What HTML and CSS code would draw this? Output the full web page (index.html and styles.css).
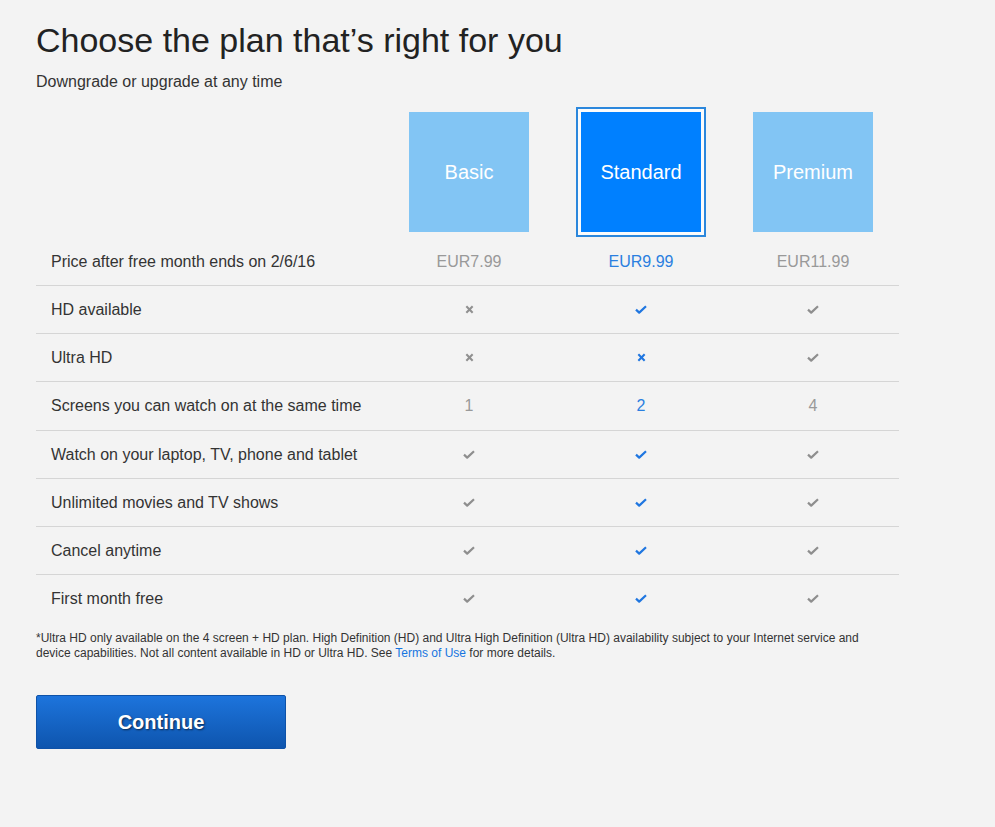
FILE: index.html
```html
<!DOCTYPE html>
<html lang="en">
<head>
<meta charset="utf-8">
<title>Choose the plan</title>
<link rel="stylesheet" href="styles.css">
</head>
<body>
<svg width="0" height="0" class="defs">
  <defs>
    <symbol id="chk" viewBox="0 0 12 9"><path d="M1 4.6 L4.2 7.6 L11 1.2" fill="none" stroke="currentColor" stroke-width="2.2" stroke-linejoin="round"/></symbol>
    <symbol id="crs" viewBox="0 0 10 10"><path d="M1.5 1.5 L8.5 8.5 M8.5 1.5 L1.5 8.5" fill="none" stroke="currentColor" stroke-width="2.3"/></symbol>
  </defs>
</svg>
<main class="page">
  <h1 class="title">Choose the plan that’s right for you</h1>
  <p class="subtitle">Downgrade or upgrade at any time</p>

  <div class="table">
    <div class="row head">
      <div class="label"></div>
      <div class="cell"><div class="plan">Basic</div></div>
      <div class="cell"><div class="plan selected">Standard</div></div>
      <div class="cell"><div class="plan">Premium</div></div>
    </div>
    <div class="row line">
      <div class="label">Price after free month ends on 2/6/16</div>
      <div class="cell grey">EUR7.99</div>
      <div class="cell blue">EUR9.99</div>
      <div class="cell grey">EUR11.99</div>
    </div>
    <div class="row line">
      <div class="label">HD available</div>
      <div class="cell grey"><svg class="x"><use href="#crs"/></svg></div>
      <div class="cell blue"><svg class="c"><use href="#chk"/></svg></div>
      <div class="cell grey"><svg class="c"><use href="#chk"/></svg></div>
    </div>
    <div class="row line">
      <div class="label">Ultra HD</div>
      <div class="cell grey"><svg class="x"><use href="#crs"/></svg></div>
      <div class="cell blue"><svg class="x"><use href="#crs"/></svg></div>
      <div class="cell grey"><svg class="c"><use href="#chk"/></svg></div>
    </div>
    <div class="row line tall">
      <div class="label">Screens you can watch on at the same time</div>
      <div class="cell grey">1</div>
      <div class="cell blue">2</div>
      <div class="cell grey">4</div>
    </div>
    <div class="row line">
      <div class="label">Watch on your laptop, TV, phone and tablet</div>
      <div class="cell grey"><svg class="c"><use href="#chk"/></svg></div>
      <div class="cell blue"><svg class="c"><use href="#chk"/></svg></div>
      <div class="cell grey"><svg class="c"><use href="#chk"/></svg></div>
    </div>
    <div class="row line">
      <div class="label">Unlimited movies and TV shows</div>
      <div class="cell grey"><svg class="c"><use href="#chk"/></svg></div>
      <div class="cell blue"><svg class="c"><use href="#chk"/></svg></div>
      <div class="cell grey"><svg class="c"><use href="#chk"/></svg></div>
    </div>
    <div class="row line">
      <div class="label">Cancel anytime</div>
      <div class="cell grey"><svg class="c"><use href="#chk"/></svg></div>
      <div class="cell blue"><svg class="c"><use href="#chk"/></svg></div>
      <div class="cell grey"><svg class="c"><use href="#chk"/></svg></div>
    </div>
    <div class="row line last">
      <div class="label">First month free</div>
      <div class="cell grey"><svg class="c"><use href="#chk"/></svg></div>
      <div class="cell blue"><svg class="c"><use href="#chk"/></svg></div>
      <div class="cell grey"><svg class="c"><use href="#chk"/></svg></div>
    </div>
  </div>

  <p class="note">*Ultra HD only available on the 4 screen + HD plan. High Definition (HD) and Ultra High Definition (Ultra HD) availability subject to your Internet service and device capabilities. Not all content available in HD or Ultra HD. See <a href="#" class="link">Terms of Use</a> for more details.</p>

  <button class="continue" type="button">Continue</button>
</main>
</body>
</html>
```

FILE: styles.css
```css
html, body {
  margin: 0;
  padding: 0;
  background: #f3f3f3;
}
body {
  font-family: "Liberation Sans", Arial, sans-serif;
  color: #333;
}
.defs {
  position: absolute;
  width: 0;
  height: 0;
}
.page {
  padding: 20px 0 0 36px;
}
.title {
  margin: 0;
  font-size: 34px;
  line-height: 40px;
  font-weight: normal;
  color: #222;
}
.subtitle {
  margin: 12px 0 0;
  font-size: 16px;
  line-height: 20px;
}
.table {
  width: 863px;
  margin-top: 20px;
}
.row {
  display: grid;
  grid-template-columns: 347px repeat(3, 172px);
  align-items: center;
}
.row.head {
  height: 126px;
  align-items: start;
}
.row.line {
  height: 47px;
  border-bottom: 1px solid #d5d5d5;
}
.row.line.tall {
  height: 48px;
}
.row.line.last {
  border-bottom: none;
}
.label {
  padding-left: 15px;
  font-size: 16px;
  line-height: 20px;
  color: #333;
}
.cell {
  display: flex;
  justify-content: center;
  align-items: center;
  font-size: 16px;
  line-height: 20px;
}
.grey { color: #999; }
.blue { color: #2a7fe0; }
.plan {
  width: 120px;
  height: 120px;
  background: #82c5f4;
  color: #fff;
  font-size: 20px;
  display: flex;
  align-items: center;
  justify-content: center;
}
.plan.selected {
  background: #0080ff;
  box-shadow: 0 0 0 3px #fbfbfb, 0 0 0 5px #2b87dc;
}
.c {
  width: 12px;
  height: 9px;
}
.cell.grey .c { color: #8e8e8e; }
.cell.blue .c, .cell.blue .x { color: #1f76e0; }
.x {
  width: 9px;
  height: 9px;
}
.cell.grey .x { color: #909090; }
.note {
  margin: 9px 0 0;
  width: 845px;
  font-size: 12px;
  line-height: 15px;
  color: #333;
}
.link {
  color: #1675e0;
  text-decoration: none;
}
.continue {
  margin-top: 34px;
  width: 250px;
  height: 54px;
  border: 1px solid #0e52a8;
  border-radius: 2px;
  background: linear-gradient(#1d74dc, #0e55ae);
  color: #fff;
  font-family: "Liberation Sans", Arial, sans-serif;
  font-size: 20px;
  font-weight: bold;
  text-shadow: 1px 1px 2px rgba(0, 0, 0, 0.6);
  cursor: pointer;
}
```
